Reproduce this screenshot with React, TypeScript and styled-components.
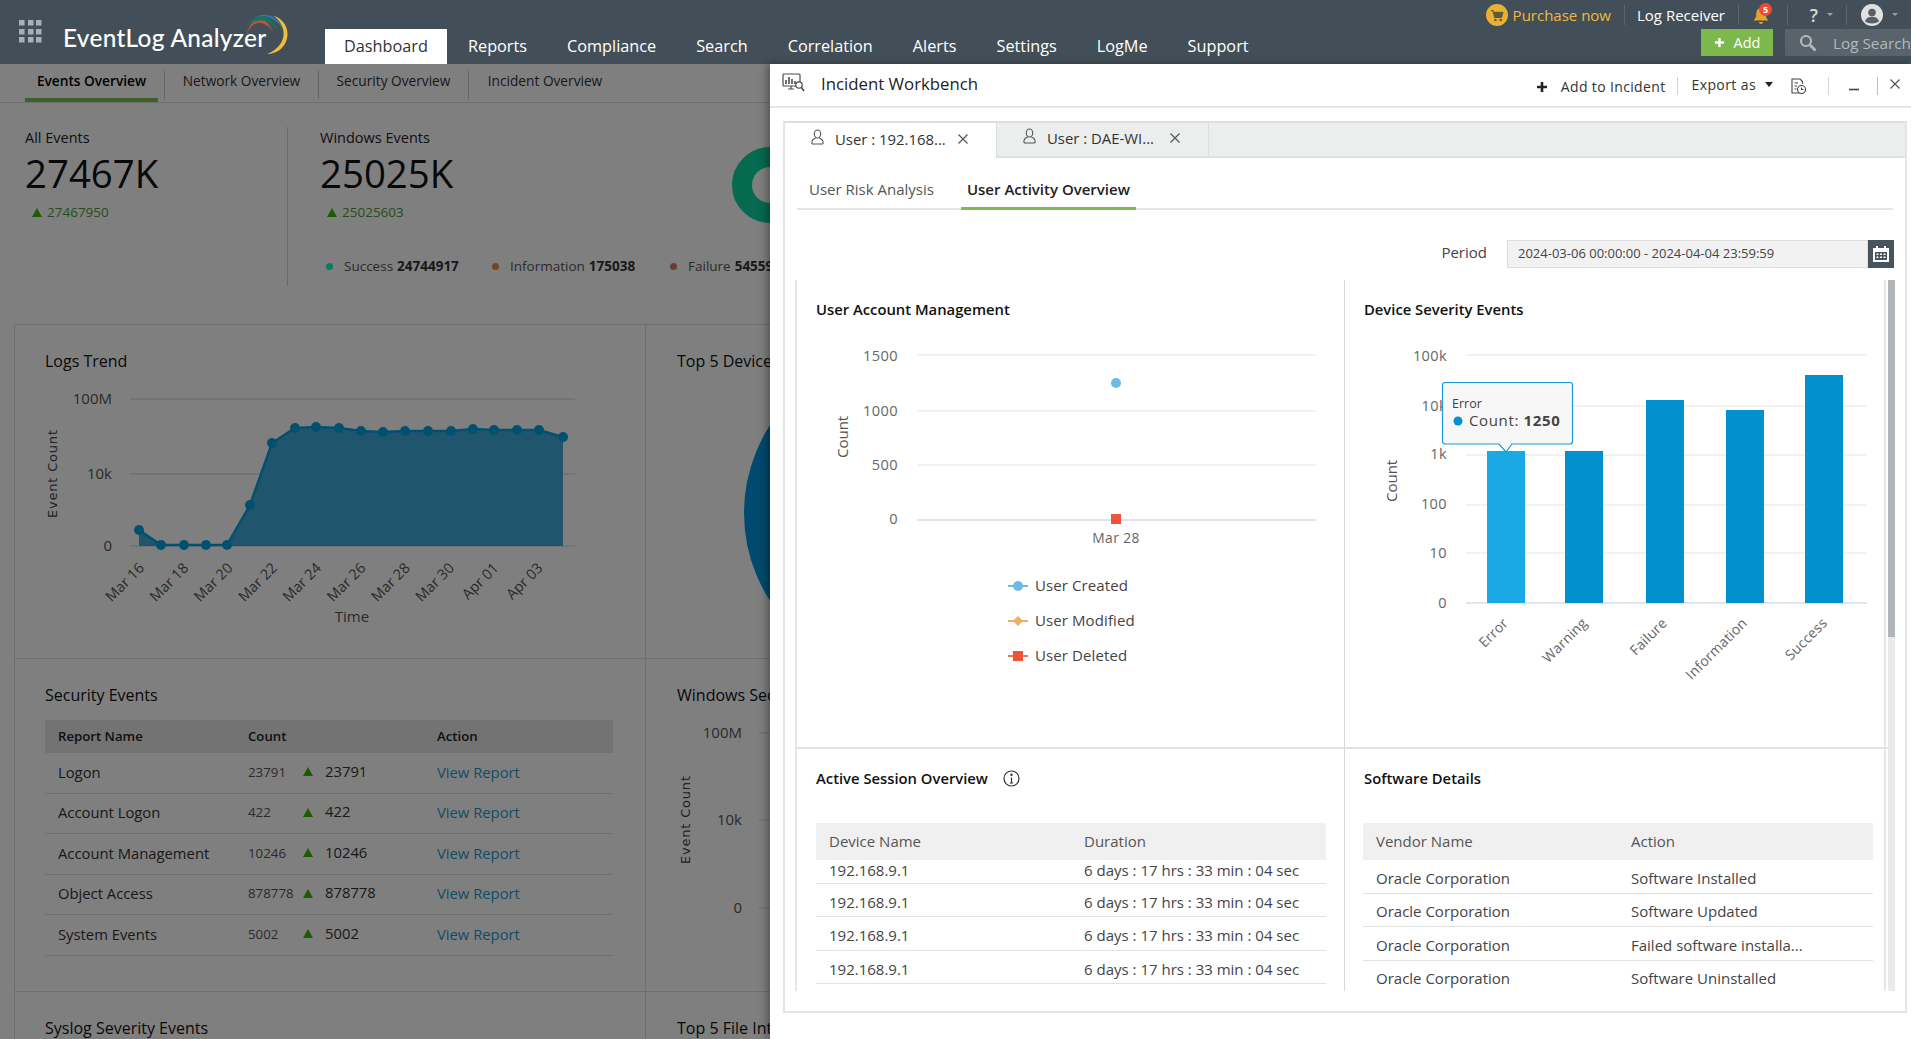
import React from "react";
import styled, { createGlobalStyle } from "styled-components";

const Global = createGlobalStyle`
  html, body { margin: 0; padding: 0; background: #fff; }
  body { font-family: "Open Sans", "Liberation Sans", sans-serif; color: #222; }
  * { box-sizing: border-box; }
`;

const Page = styled.div`
  width: 1911px;
  height: 1039px;
  overflow: hidden;
  display: flex;
  flex-direction: column;
`;

/* ---------- top header ---------- */
const Header = styled.header`
  height: 64px;
  flex: none;
  background: #434f58;
  display: flex;
  color: #fff;
`;
const Brand = styled.div`
  width: 325px;
  flex: none;
  display: flex;
  align-items: flex-start;
  padding: 20px 0 0 19px;
`;
const BrandName = styled.span`
  font-family: "Lato", "Open Sans", sans-serif;
  font-size: 24.4px;
  font-weight: 500;
  line-height: 30px;
  margin: 3px 0 0 21px;
  color: #fff;
  letter-spacing: 0.3px;
  white-space: nowrap;
`;
const BrandArc = styled.svg`
  margin: -8px 0 0 -22px;
  flex: none;
`;
const Nav = styled.nav`
  display: flex;
  align-items: flex-end;
  height: 64px;
`;
const NavItem = styled.div<{ $active?: boolean }>`
  height: 35px;
  line-height: 34px;
  font-size: 16.25px;
  padding: 0 20px;
  white-space: nowrap;
  ${(p) => (p.$active ? "background:#fff;color:#333;width:122px;padding:0 0 0 19px;margin-right:1px;" : "color:#fff;")}
`;
const HeaderRight = styled.div`
  margin-left: auto;
  display: flex;
  flex-direction: column;
  align-items: flex-end;
`;
const TopRow = styled.div`
  height: 29px;
  display: flex;
  align-items: center;
`;
const TopCell = styled.div<{ $w: number; $line?: boolean; $color?: string }>`
  width: ${(p) => p.$w}px;
  height: 20px;
  display: flex;
  align-items: center;
  justify-content: flex-end;
  gap: 5px;
  font-size: 15px;
  white-space: nowrap;
  color: ${(p) => p.$color || "#fff"};
  border-right: ${(p) => (p.$line ? "1px solid #5b666e" : "none")};
  padding-right: 13px;
`;
const HelpMark = styled.span`
  font-size: 18px;
  font-weight: 600;
`;
const Caret = styled.i`
  display: inline-block;
  border-left: 3px solid transparent;
  border-right: 3px solid transparent;
  border-top: 3px solid #9aa2a8;
  margin-left: 4px;
`;
const BellWrap = styled.span`
  position: relative;
  display: flex;
  width: 22px;
  height: 22px;
`;
const BellBadge = styled.span`
  position: absolute;
  left: 7px;
  top: -1px;
  width: 13px;
  height: 13px;
  border-radius: 50%;
  background: #ec4a35;
  color: #fff;
  font-size: 9px;
  font-weight: 700;
  line-height: 13px;
  text-align: center;
`;
const ToolRow = styled.div`
  display: flex;
  gap: 12px;
`;
const AddButton = styled.div`
  width: 72px;
  height: 27px;
  background: #7db84d;
  color: #fff;
  font-size: 14.5px;
  display: flex;
  align-items: center;
  justify-content: center;
  gap: 9px;
`;
const SearchBox = styled.div`
  width: 126px;
  height: 27px;
  background: #58636b;
  color: #b3b9bd;
  font-size: 15.3px;
  display: flex;
  align-items: center;
  gap: 16px;
  padding-left: 14px;
  white-space: nowrap;
  overflow: hidden;
`;

/* ---------- main area ---------- */
const Main = styled.div`
  flex: 1;
  min-height: 0;
  display: flex;
`;
const Dashboard = styled.section`
  width: 770px;
  flex: none;
  position: relative;
  overflow: hidden;
  background: #fff;
`;
const Dim = styled.div`
  position: absolute;
  inset: 0;
  background: rgba(0, 0, 0, 0.5);
`;
const SubNav = styled.div`
  height: 39px;
  display: flex;
  padding-left: 25px;
  border-bottom: 1px solid #dcdcdc;
`;
const SubNavItem = styled.div<{ $active?: boolean; $w: number }>`
  width: ${(p) => p.$w}px;
  height: 38px;
  padding-top: 7px;
  font-size: 13.7px;
  line-height: 20px;
  text-align: center;
  white-space: nowrap;
  color: ${(p) => (p.$active ? "#000" : "#333")};
  font-weight: ${(p) => (p.$active ? 600 : 400)};
  border-bottom: ${(p) => (p.$active ? "4px solid #7fc04a" : "none")};
`;
const SubNavSep = styled.i<{ $ml?: number }>`
  width: 1px;
  height: 28px;
  margin: 7px 0 0 ${(p) => p.$ml || 0}px;
  background: #c8c8c8;
  flex: none;
`;
const StatsRow = styled.div`
  height: 221px;
  display: flex;
  padding: 24px 0 0 25px;
`;
const StatBlock = styled.div<{ $first?: boolean }>`
  height: 159px;
  flex: none;
  ${(p) => (p.$first ? "width:263px;border-right:1px solid #d4d4d4;" : "padding-left:32px;")}
  white-space: nowrap;
`;
const StatLabel = styled.div`
  font-size: 14.5px;
  line-height: 22px;
  color: #222;
`;
const StatValue = styled.div`
  font-size: 38.4px;
  line-height: 48px;
  color: #111;
`;
const StatDelta = styled.div`
  margin: 5px 0 0 7px;
  font-size: 13.5px;
  line-height: 20px;
  color: #4f9a35;
  display: flex;
  align-items: center;
  gap: 5px;
`;
const UpArrow = styled.i`
  display: inline-block;
  border-left: 5px solid transparent;
  border-right: 5px solid transparent;
  border-bottom: 9px solid #38b800;
  flex: none;
`;
const LegendRow = styled.div`
  margin: 34px 0 0 6px;
  display: flex;
  align-items: center;
  line-height: 20px;
  font-size: 13.5px;
  color: #555;
`;
const LegendItem = styled.span<{ $w: number; $dot: string }>`
  width: ${(p) => p.$w}px;
  flex: none;
  display: flex;
  align-items: center;
  gap: 11px;
  &::before {
    content: "";
    width: 7px;
    height: 7px;
    border-radius: 50%;
    background: ${(p) => p.$dot};
  }
  b {
    color: #333;
    font-weight: 700;
    margin-left: -7px;
  }
`;
const Donut = styled.div`
  position: absolute;
  left: 732px;
  top: 83px;
  width: 76px;
  height: 76px;
  border-radius: 50%;
  border: 20px solid #0ad49f;
`;
const CellGrid = styled.div`
  margin-left: 14px;
  display: grid;
  grid-template-columns: 631px 640px;
  grid-auto-rows: 333.5px;
  border-top: 1px solid #dedede;
`;
const Cell = styled.div<{ $right?: boolean }>`
  border-left: 1px solid #dedede;
  border-bottom: 1px solid #dedede;
  padding: ${(p) => (p.$right ? "24px 0 0 31px" : "24px 0 0 30px")};
  overflow: hidden;
  position: relative;
`;
const CellTitle = styled.h3`
  margin: 0;
  font-size: 16px;
  font-weight: 400;
  line-height: 24px;
  color: #111;
  white-space: nowrap;
`;
const TrendSvg = styled.svg`
  display: block;
  margin: 3px 0 0 -30px;
`;
const SideSvg = styled.svg`
  display: block;
  margin: 3px 0 0 -31px;
`;
const PieDisc = styled.div`
  position: absolute;
  left: 98px;
  top: 27px;
  width: 322px;
  height: 322px;
  border-radius: 50%;
  background: #0094dc;
`;
const SecTable = styled.table`
  width: 568px;
  margin-top: 13px;
  border-collapse: collapse;
  table-layout: fixed;
  font-size: 14.8px;
  color: #333;
  th {
    height: 33px;
    background: #e6e6e6;
    font-weight: 600;
    font-size: 13.2px;
    text-align: left;
    padding: 0 0 0 13px;
    color: #222;
  }
  td {
    height: 40.5px;
    border-bottom: 1px solid #dedede;
    padding: 0 0 2px 13px;
    white-space: nowrap;
  }
`;
const NameCol = styled.col`
  width: 190px;
`;
const CountCol = styled.col`
  width: 189px;
`;
const CountCell = styled.div`
  display: flex;
  align-items: center;
`;
const SmallCount = styled.span`
  width: 55px;
  font-size: 13.3px;
  color: #555;
`;
const BigCount = styled.span`
  margin: -2px 0 0 12px;
  font-size: 14.8px;
  color: #333;
`;
const ReportLink = styled.span`
  color: #1f9acb;
`;

/* ---------- incident panel ---------- */
const Panel = styled.aside`
  flex: 1;
  min-width: 0;
  position: relative;
  background: #fff;
  box-shadow: -3px 0 8px rgba(0, 0, 0, 0.35);
  display: flex;
  flex-direction: column;
`;
const PanelHead = styled.div`
  height: 44px;
  flex: none;
  display: flex;
  align-items: center;
  border-bottom: 2px solid #e6e6e6;
  padding: 0 11px 0 12px;
`;
const PanelTitle = styled.h2`
  margin: -4px 0 0 16px;
  font-size: 16.8px;
  font-weight: 400;
  color: #222;
`;
const PanelActions = styled.div`
  margin-left: auto;
  display: flex;
  align-items: center;
  color: #333;
  font-size: 14px;
`;
const AddIncident = styled.span`
  display: flex;
  align-items: center;
  gap: 13px;
  letter-spacing: 0.35px;
  padding-right: 11px;
  margin-top: 3px;
`;
const ActionSep = styled.i<{ $ml: number; $mr: number; $dark?: boolean }>`
  width: 1px;
  height: 18px;
  margin: 2px ${(p) => p.$mr}px 0 ${(p) => p.$ml}px;
  background: ${(p) => (p.$dark ? "#bdbdbd" : "#d4d4d4")};
`;
const ExportAs = styled.span`
  display: flex;
  align-items: center;
  gap: 9px;
  letter-spacing: 0.4px;
  margin-top: -2px;
`;
const DownTri = styled.i`
  border-left: 4.5px solid transparent;
  border-right: 4.5px solid transparent;
  border-top: 5px solid #222;
`;
const Frame = styled.div`
  margin: 13px 4px 0 13px;
  height: 892px;
  border: 2px solid #e4e6e6;
  border-top: 2px solid #dcdfdf;
  display: flex;
  flex-direction: column;
`;
const TabStrip = styled.div`
  height: 35px;
  flex: none;
  display: flex;
  background: #eceeee;
  border-bottom: 2px solid #dfe2e2;
`;
const UserTab = styled.div<{ $active?: boolean }>`
  width: 212px;
  height: ${(p) => (p.$active ? 35 : 33)}px;
  background: ${(p) => (p.$active ? "#fff" : "#eceeee")};
  border-right: 1px solid #dcdfdf;
  display: flex;
  align-items: center;
  padding: 0 0 3px 25px;
  font-size: 14.9px;
  color: #333;
  gap: 10px;
  white-space: nowrap;
`;
const TabText = styled.span`
  width: 113px;
`;
const SubTabs = styled.div`
  margin: 0 12px;
  height: 52px;
  flex: none;
  display: flex;
  align-items: flex-end;
  border-bottom: 2px solid #e6e6e6;
`;
const SubTab = styled.div<{ $active?: boolean }>`
  height: 40px;
  margin-bottom: -2px;
  padding: 7px 6px 0;
  margin-left: ${(p) => (p.$active ? 21 : 6)}px;
  line-height: 24px;
  font-size: 15px;
  white-space: nowrap;
  color: ${(p) => (p.$active ? "#222" : "#555")};
  font-weight: ${(p) => (p.$active ? 600 : 400)};
  border-bottom: 3px solid ${(p) => (p.$active ? "#7fb84e" : "transparent")};
`;
const PeriodRow = styled.div`
  height: 70px;
  flex: none;
  display: flex;
  justify-content: flex-end;
  align-items: flex-start;
  padding: 30px 11px 0 0;
`;
const PeriodLabel = styled.span`
  font-size: 15px;
  line-height: 24px;
  color: #444;
  margin-right: 20px;
`;
const PeriodInput = styled.div`
  width: 361px;
  height: 28px;
  background: #f2f2f2;
  border: 1px solid #dddddd;
  font-size: 13px;
  line-height: 24px;
  padding-left: 10px;
  color: #444;
`;
const CalendarButton = styled.div`
  width: 26px;
  height: 28px;
  background: #46545d;
  display: flex;
  align-items: center;
  justify-content: center;
`;
const Scroller = styled.div`
  margin-left: 10px;
  height: 711px;
  display: flex;
  overflow: hidden;
`;
const Cards = styled.div`
  width: 1091px;
  flex: none;
  display: grid;
  grid-template-columns: 548px 543px;
  grid-template-rows: 469px 1fr;
  border-left: 2px solid #e6e6e6;
  border-right: 2px solid #e6e6e6;
`;
const Card = styled.div<{ $line?: boolean; $bottom?: boolean }>`
  padding-top: 19px;
  ${(p) => (p.$line ? "border-right:1px solid #d8d8d8;" : "")}
  ${(p) => (p.$bottom ? "border-bottom:2px solid #e2e2e2;" : "")}
  overflow: hidden;
`;
const CardTitle = styled.h4`
  margin: 0;
  padding-left: 19px;
  font-size: 14.8px;
  font-weight: 600;
  line-height: 20px;
  color: #111;
  display: flex;
  align-items: center;
  gap: 15px;
`;
const ChartSvg = styled.svg`
  display: block;
  margin-top: 1px;
`;
const SmallTable = styled.div<{ $ml: number }>`
  margin: 35px 0 0 ${(p) => p.$ml}px;
  width: 510px;
  font-size: 15px;
  color: #444;
`;
const SmallHead = styled.div`
  height: 37px;
  display: grid;
  grid-template-columns: 255px 1fr;
  align-items: center;
  padding: 0 0 1px 13px;
  background: #f0f0f0;
  color: #555;
`;
const SmallRow = styled.div<{ $h: number; $shift: number }>`
  height: ${(p) => p.$h}px;
  display: grid;
  grid-template-columns: 255px 1fr;
  align-items: center;
  padding-left: 13px;
  padding-top: ${(p) => Math.max(p.$shift, 0)}px;
  padding-bottom: ${(p) => Math.max(-p.$shift, 0)}px;
  border-bottom: 1px solid #e2e2e2;
  white-space: nowrap;
`;
const ScrollTrack = styled.div`
  width: 7px;
  margin-left: 2px;
  flex: none;
  background: #e8eaec;
`;
const ScrollThumb = styled.div`
  height: 357px;
  background: #b3b6b9;
`;
const ChromeIcon = styled.svg<{ $m?: string }>`
  flex: none;
  margin: ${(p) => p.$m || "0"};
`;

/* ---------- small drawings ---------- */
const AppGrid = () => (
  <ChromeIcon width="23" height="23" viewBox="0 0 23 23" fill="#a9afb3">
    {[0, 9, 17].flatMap((y) =>
      [0, 9, 17].map((x) => <rect key={`${x}-${y}`} x={x} y={y} width="5.5" height="5.5" />)
    )}
  </ChromeIcon>
);

const LogoArc = () => (
  <BrandArc width="44" height="44" viewBox="244 10 44 44" fill="none">
    <path d="M246.5 33C248 26 251 20 258 17C263 16 269 21 273 29C268 23 263 20.5 258 21C252 22 248.5 27 246.5 33Z" fill="#c5503f" />
    <path d="M247 24C251 17 257 14 264 14.5C270 16 275 21 278 28C273 22 268 19 262 18.5C256 18.5 251 20 247 24Z" fill="#127a5c" />
    <path d="M255 15.5C261 11.5 270 12 276 17C280 20 282 23 283 27C278 20 272 16 266 14.5C262 14 258 14.5 255 15.5Z" fill="#2b78b8" />
    <path d="M273 13.5C282 16 288 24 287.5 33C287 44 278 52 267 52C275 49 282 43 283.5 34C284.5 26 280 18 273 13.5Z" fill="#eebd3a" />
  </BrandArc>
);

const CartBadge = () => (
  <svg width="22" height="22" viewBox="0 0 22 22">
    <circle cx="11" cy="11" r="11" fill="#e9b032" />
    <path d="M5 6.5h2l1.6 7h7l1.4-5.2H7.6" fill="#5b5a3e" stroke="#5b5a3e" strokeWidth="1" />
    <circle cx="9.4" cy="16" r="1.3" fill="#5b5a3e" />
    <circle cx="14.8" cy="16" r="1.3" fill="#5b5a3e" />
  </svg>
);

const BellIcon = () => (
  <svg width="18" height="22" viewBox="0 0 18 22">
    <path d="M9 4C5.5 4 4.2 7 4.2 10.5C4.2 13.5 3 15 1.5 16.5H16.5C15 15 13.8 13.5 13.8 10.5C13.8 7 12.5 4 9 4Z" fill="#e3a32d" />
    <path d="M7 18H11C11 20.5 7 20.5 7 18Z" fill="#e3a32d" />
  </svg>
);

const AvatarIcon = () => (
  <svg width="22" height="22" viewBox="0 0 22 22">
    <circle cx="11" cy="11" r="11" fill="#dfe1e2" />
    <circle cx="11" cy="8.5" r="3.8" fill="#55606a" />
    <path d="M4 17.5C5 13.8 8 12.8 11 12.8C14 12.8 17 13.8 18 17.5C14 20 8 20 4 17.5Z" fill="#55606a" />
  </svg>
);

const PlusIcon = ({ size, color, w }: { size: number; color: string; w: number }) => (
  <svg width={size} height={size} viewBox="0 0 12 12">
    <path d="M6 1V11M1 6H11" stroke={color} strokeWidth={w} />
  </svg>
);

const SearchIcon = () => (
  <ChromeIcon width="18" height="18" viewBox="0 0 18 18" fill="none" stroke="#b3b9bd">
    <circle cx="7" cy="7" r="5" strokeWidth="2.2" />
    <path d="M11 11L16.5 16.5" strokeWidth="2.8" />
  </ChromeIcon>
);

const WorkbenchIcon = () => (
  <ChromeIcon $m="-4px 0 0 0" width="23" height="20" viewBox="0 0 23 20" fill="none" stroke="#4a4a4a" strokeWidth="1.2">
    <rect x="1" y="1" width="17" height="12" rx="1" />
    <path d="M4 11V7M7 11V4M10 11V6M13 11V8" strokeWidth="1.6" />
    <path d="M6 16H12M9 13V16" />
    <circle cx="17" cy="12" r="3.2" fill="#fff" />
    <path d="M19.5 14.5L22 18" strokeWidth="1.6" />
  </ChromeIcon>
);

const ScheduleDoc = () => (
  <ChromeIcon $m="3px 0 0 17px" width="17" height="17" viewBox="0 0 17 17" fill="none" stroke="#444" strokeWidth="1.1">
    <path d="M9 15H2V1H10L12.5 3.5V6" />
    <path d="M4.5 5H8M4.5 8H7M4.5 11H6.5" />
    <circle cx="11.5" cy="11.5" r="4" />
    <path d="M11.5 9.5V11.5H13.5" />
  </ChromeIcon>
);

const MinusIcon = () => (
  <ChromeIcon $m="4px 0 0 0" width="10" height="10" viewBox="0 0 10 10">
    <path d="M0 7.5H10" stroke="#444" strokeWidth="1.6" />
  </ChromeIcon>
);

const CloseIcon = ({ m }: { m?: string }) => (
  <ChromeIcon $m={m} width="10" height="10" viewBox="0 0 10 10">
    <path d="M0.5 0.5L9.5 9.5M9.5 0.5L0.5 9.5" stroke="#555" strokeWidth="1.2" />
  </ChromeIcon>
);

const PersonIcon = () => (
  <ChromeIcon $m="-5px 0 0 0" width="15" height="16" viewBox="0 0 15 16" fill="none" stroke="#555" strokeWidth="1.1">
    <ellipse cx="7.5" cy="5" rx="3.2" ry="4" />
    <path d="M2 15V12.5C2 10.5 4 10 5.5 9.2M13 15V12.5C13 10.5 11 10 9.5 9.2M2 15H13" />
  </ChromeIcon>
);

const CalendarIcon = () => (
  <svg width="18" height="18" viewBox="0 0 18 18" fill="#fff">
    <path d="M1 3H4V1H6V3H12V1H14V3H17V17H1ZM3 7V15H15V7Z" />
    <path d="M4.5 8.5h2v1.5h-2zM8 8.5h2v1.5h-2zM11.5 8.5h2v1.5h-2zM4.5 11.5h2V13h-2zM8 11.5h2V13h-2zM11.5 11.5h2V13h-2z" />
  </svg>
);

const InfoIcon = () => (
  <ChromeIcon width="17" height="17" viewBox="0 0 17 17" fill="none" stroke="#333" strokeWidth="1.2">
    <circle cx="8.5" cy="8.5" r="7.5" />
    <path d="M8.5 7.5V13M6.8 13H10.2" />
    <circle cx="8.5" cy="4.7" r="0.6" fill="#333" />
  </ChromeIcon>
);

/* ---------- charts ---------- */
const trendX = [139, 161, 184, 206, 227, 250, 272, 295, 316, 339, 361, 383, 405, 428, 451, 473, 494, 517, 539, 563];
const trendY = [529, 544, 544, 544, 544, 504, 442, 427, 426, 427, 430, 431, 430, 430, 430, 428, 429, 429, 429, 436];
const trendTicks = ["Mar 16", "Mar 18", "Mar 20", "Mar 22", "Mar 24", "Mar 26", "Mar 28", "Mar 30", "Apr 01", "Apr 03"];

const LogsTrendChart = () => {
  const pts = trendX.map((x, i) => `${x},${trendY[i]}`).join(" ");
  return (
    <TrendSvg width="630" height="270" viewBox="15 375 630 270" fontFamily="'Open Sans', sans-serif">
      {[398, 473, 545].map((y) => (
        <line key={y} x1="130" x2="575" y1={y} y2={y} stroke="#e2e2e2" strokeWidth="1.5" />
      ))}
      {[["100M", 403], ["10k", 478], ["0", 550]].map(([t, y]) => (
        <text key={t} x="112" y={y} textAnchor="end" fontSize="15" fill="#555">{t}</text>
      ))}
      <text transform="translate(57 517) rotate(-90)" fontSize="13" letterSpacing="0.8" fill="#444" fontFamily="'DejaVu Sans', sans-serif">Event Count</text>
      <polygon points={`139,545 ${pts} 563,545`} fill="#3eacda" />
      <polyline points={pts} fill="none" stroke="#04a0de" strokeWidth="2.5" />
      {trendX.map((x, i) => (
        <circle key={x} cx={x} cy={trendY[i]} r="5" fill="#04a0de" />
      ))}
      {trendTicks.map((t, i) => (
        <text key={t} transform={`translate(${145 + i * 44.3} 568) rotate(-45)`} textAnchor="end" fontSize="14.5" fill="#555">{t}</text>
      ))}
      <text x="352" y="621" textAnchor="middle" fontSize="15" fill="#555">Time</text>
    </TrendSvg>
  );
};

const WindowsChart = () => (
  <SideSvg width="130" height="270" viewBox="645 710 130 270" fontFamily="'Open Sans', sans-serif">
    {[["100M", 738], ["10k", 825], ["0", 913]].map(([t, y]) => (
      <text key={t} x="741" y={y} textAnchor="end" fontSize="15" fill="#555">{t}</text>
    ))}
    {[733, 820, 908].map((y) => (
      <line key={y} x1="758" x2="775" y1={y} y2={y} stroke="#e2e2e2" strokeWidth="1.5" />
    ))}
    <text transform="translate(689 864) rotate(-90)" fontSize="13" letterSpacing="0.8" fill="#444" fontFamily="'DejaVu Sans', sans-serif">Event Count</text>
  </SideSvg>
);

const UserAccountChart = () => (
  <ChartSvg width="546" height="427" viewBox="797 320 546 427" fontFamily="'Open Sans', sans-serif">
    {[355, 411, 465].map((y) => (
      <line key={y} x1="917" x2="1316" y1={y} y2={y} stroke="#eeeeee" strokeWidth="1.5" />
    ))}
    <line x1="917" x2="1316" y1="520" y2="520" stroke="#d5deea" strokeWidth="1.5" />
    {[["1500", 361], ["1000", 416], ["500", 470], ["0", 524]].map(([t, y]) => (
      <text key={t} x="898" y={y} textAnchor="end" fontSize="14.6" letterSpacing="0.4" fill="#666">{t}</text>
    ))}
    <text transform="translate(848 458) rotate(-90)" fontSize="15" fill="#555">Count</text>
    <circle cx="1116" cy="383" r="5" fill="#6fb9e6" />
    <rect x="1111" y="514" width="10" height="10" fill="#f0533a" />
    <text x="1116" y="543" textAnchor="middle" fontSize="13.8" letterSpacing="0.4" fill="#666">Mar 28</text>
    <g fontSize="15" fontWeight="500" fill="#444" letterSpacing="0.1">
      <line x1="1008" x2="1028" y1="586" y2="586" stroke="#6fb9e6" strokeWidth="2" />
      <circle cx="1018" cy="586" r="5" fill="#6fb9e6" />
      <text x="1035" y="591">User Created</text>
      <line x1="1008" x2="1028" y1="621" y2="621" stroke="#f0b060" strokeWidth="2" />
      <path d="M1018 616L1023 621L1018 626L1013 621Z" fill="#f0b060" />
      <text x="1035" y="626">User Modified</text>
      <line x1="1008" x2="1028" y1="656" y2="656" stroke="#f07a50" strokeWidth="2" />
      <rect x="1013" y="651" width="10" height="10" fill="#f0533a" />
      <text x="1035" y="661">User Deleted</text>
    </g>
  </ChartSvg>
);

const severityBars = [
  { name: "Error", x: 1487, top: 451, lx: 1509 },
  { name: "Warning", x: 1565, top: 451, lx: 1588 },
  { name: "Failure", x: 1646, top: 400, lx: 1668 },
  { name: "Information", x: 1726, top: 410, lx: 1748 },
  { name: "Success", x: 1805, top: 375, lx: 1828 },
];

const SeverityChart = () => (
  <ChartSvg width="543" height="427" viewBox="1345 320 543 427" fontFamily="'Open Sans', sans-serif">
    {[355, 406, 455, 505, 553].map((y) => (
      <line key={y} x1="1466" x2="1867" y1={y} y2={y} stroke="#eeeeee" strokeWidth="1.5" />
    ))}
    <line x1="1466" x2="1867" y1="603" y2="603" stroke="#d5deea" strokeWidth="1.5" />
    {[["100k", 361], ["10k", 411], ["1k", 459], ["100", 509], ["10", 558], ["0", 608]].map(([t, y]) => (
      <text key={t} x="1447" y={y} textAnchor="end" fontSize="14.5" letterSpacing="0.4" fill="#666">{t}</text>
    ))}
    <text transform="translate(1397 502) rotate(-90)" fontSize="15" fill="#555">Count</text>
    {severityBars.map((b, i) => (
      <rect key={b.name} x={b.x} y={b.top} width="38" height={603 - b.top} fill={i === 0 ? "#1aa9e5" : "#0291ce"} />
    ))}
    {severityBars.map((b) => (
      <text key={b.name} transform={`translate(${b.lx} 624) rotate(-45)`} textAnchor="end" fontSize="14" letterSpacing="0.2" fill="#666">{b.name}</text>
    ))}
    <path
      d="M1445 382.5H1570Q1572.5 382.5 1572.5 385V441Q1572.5 444 1570 444H1512L1506 452L1499 444H1445Q1442.5 444 1442.5 441V385Q1442.5 382.5 1445 382.5Z"
      fill="#f7f7f7"
      stroke="#1a9bdc"
      strokeWidth="1.2"
    />
    <text x="1452" y="408" fontSize="12.5" fill="#444">Error</text>
    <circle cx="1458" cy="421" r="4.5" fill="#0291ce" />
    <text x="1469" y="426" fontSize="15" letterSpacing="0.65" fill="#444">
      Count: <tspan fontWeight="700">1250</tspan>
    </text>
  </ChartSvg>
);

/* ---------- data ---------- */
const securityRows = [
  { name: "Logon", count: "23791" },
  { name: "Account Logon", count: "422" },
  { name: "Account Management", count: "10246" },
  { name: "Object Access", count: "878778" },
  { name: "System Events", count: "5002" },
];
const softwareRows = ["Software Installed", "Software Updated", "Failed software installa...", "Software Uninstalled"];
const sessionRows = [
  { h: 24, shift: -6 },
  { h: 33, shift: 4 },
  { h: 34, shift: 3 },
  { h: 33, shift: 4 },
];

export default function App() {
  return (
    <Page>
      <Global />
      <Header>
        <Brand>
          <AppGrid />
          <BrandName>EventLog Analyzer</BrandName>
          <LogoArc />
        </Brand>
        <Nav>
          <NavItem $active>Dashboard</NavItem>
          {["Reports", "Compliance", "Search", "Correlation", "Alerts", "Settings", "LogMe", "Support"].map((n) => (
            <NavItem key={n}>{n}</NavItem>
          ))}
        </Nav>
        <HeaderRight>
          <TopRow>
            <TopCell $w={151} $line $color="#efb93c">
              <CartBadge />
              Purchase now
            </TopCell>
            <TopCell $w={114} $line>Log Receiver</TopCell>
            <TopCell $w={49} $line>
              <BellWrap>
                <BellIcon />
                <BellBadge>5</BellBadge>
              </BellWrap>
            </TopCell>
            <TopCell $w={59} $line $color="#d8dbdd">
              <HelpMark>?</HelpMark>
              <Caret />
            </TopCell>
            <TopCell $w={64} $color="#d8dbdd">
              <AvatarIcon />
              <Caret />
            </TopCell>
          </TopRow>
          <ToolRow>
            <AddButton>
              <PlusIcon size={11} color="#fff" w={2.6} />
              Add
            </AddButton>
            <SearchBox>
              <SearchIcon />
              Log Search
            </SearchBox>
          </ToolRow>
        </HeaderRight>
      </Header>

      <Main>
        <Dashboard>
          <SubNav>
            <SubNavItem $active $w={133}>Events Overview</SubNavItem>
            <SubNavSep $ml={6} />
            <SubNavItem $w={153}>Network Overview</SubNavItem>
            <SubNavSep />
            <SubNavItem $w={149}>Security Overview</SubNavItem>
            <SubNavSep />
            <SubNavItem $w={152}>Incident Overview</SubNavItem>
          </SubNav>
          <StatsRow>
            <StatBlock $first>
              <StatLabel>All Events</StatLabel>
              <StatValue>27467K</StatValue>
              <StatDelta><UpArrow />27467950</StatDelta>
            </StatBlock>
            <StatBlock>
              <StatLabel>Windows Events</StatLabel>
              <StatValue>25025K</StatValue>
              <StatDelta><UpArrow />25025603</StatDelta>
              <LegendRow>
                <LegendItem $w={166} $dot="#17f5c5">Success <b>24744917</b></LegendItem>
                <LegendItem $w={178} $dot="#ee8a3a">Information <b>175038</b></LegendItem>
                <LegendItem $w={140} $dot="#d9776a">Failure <b>54559</b></LegendItem>
              </LegendRow>
            </StatBlock>
          </StatsRow>
          <Donut />
          <CellGrid>
            <Cell>
              <CellTitle>Logs Trend</CellTitle>
              <LogsTrendChart />
            </Cell>
            <Cell $right>
              <CellTitle>Top 5 Devices</CellTitle>
              <PieDisc />
            </Cell>
            <Cell>
              <CellTitle>Security Events</CellTitle>
              <SecTable>
                <colgroup>
                  <NameCol />
                  <CountCol />
                  <col />
                </colgroup>
                <thead>
                  <tr><th>Report Name</th><th>Count</th><th>Action</th></tr>
                </thead>
                <tbody>
                  {securityRows.map((r) => (
                    <tr key={r.name}>
                      <td>{r.name}</td>
                      <td>
                        <CountCell>
                          <SmallCount>{r.count}</SmallCount>
                          <UpArrow />
                          <BigCount>{r.count}</BigCount>
                        </CountCell>
                      </td>
                      <td><ReportLink>View Report</ReportLink></td>
                    </tr>
                  ))}
                </tbody>
              </SecTable>
            </Cell>
            <Cell $right>
              <CellTitle>Windows Security Events</CellTitle>
              <WindowsChart />
            </Cell>
            <Cell>
              <CellTitle>Syslog Severity Events</CellTitle>
            </Cell>
            <Cell $right>
              <CellTitle>Top 5 File Integrity</CellTitle>
            </Cell>
          </CellGrid>
          <Dim />
        </Dashboard>

        <Panel>
          <PanelHead>
            <WorkbenchIcon />
            <PanelTitle>Incident Workbench</PanelTitle>
            <PanelActions>
              <AddIncident>
                <PlusIcon size={12} color="#222" w={2.6} />
                Add to Incident
              </AddIncident>
              <ActionSep $ml={0} $mr={14} />
              <ExportAs>Export as<DownTri /></ExportAs>
              <ScheduleDoc />
              <ActionSep $ml={21} $mr={20} />
              <MinusIcon />
              <ActionSep $ml={18} $mr={12} $dark />
              <CloseIcon m="-3px 0 0 0" />
            </PanelActions>
          </PanelHead>
          <Frame>
            <TabStrip>
              <UserTab $active>
                <PersonIcon />
                <TabText>User : 192.168...</TabText>
                <CloseIcon />
              </UserTab>
              <UserTab>
                <PersonIcon />
                <TabText>User : DAE-WI...</TabText>
                <CloseIcon />
              </UserTab>
            </TabStrip>
            <SubTabs>
              <SubTab>User Risk Analysis</SubTab>
              <SubTab $active>User Activity Overview</SubTab>
            </SubTabs>
            <PeriodRow>
              <PeriodLabel>Period</PeriodLabel>
              <PeriodInput>2024-03-06 00:00:00 - 2024-04-04 23:59:59</PeriodInput>
              <CalendarButton><CalendarIcon /></CalendarButton>
            </PeriodRow>
            <Scroller>
              <Cards>
                <Card $line $bottom>
                  <CardTitle>User Account Management</CardTitle>
                  <UserAccountChart />
                </Card>
                <Card $bottom>
                  <CardTitle>Device Severity Events</CardTitle>
                  <SeverityChart />
                </Card>
                <Card $line>
                  <CardTitle>Active Session Overview <InfoIcon /></CardTitle>
                  <SmallTable $ml={19}>
                    <SmallHead><span>Device Name</span><span>Duration</span></SmallHead>
                    {sessionRows.map((r, i) => (
                      <SmallRow key={i} $h={r.h} $shift={r.shift}>
                        <span>192.168.9.1</span>
                        <span>6 days : 17 hrs : 33 min : 04 sec</span>
                      </SmallRow>
                    ))}
                  </SmallTable>
                </Card>
                <Card>
                  <CardTitle>Software Details</CardTitle>
                  <SmallTable $ml={18}>
                    <SmallHead><span>Vendor Name</span><span>Action</span></SmallHead>
                    {softwareRows.map((s) => (
                      <SmallRow key={s} $h={33.5} $shift={3}>
                        <span>Oracle Corporation</span>
                        <span>{s}</span>
                      </SmallRow>
                    ))}
                  </SmallTable>
                </Card>
              </Cards>
              <ScrollTrack><ScrollThumb /></ScrollTrack>
            </Scroller>
          </Frame>
        </Panel>
      </Main>
    </Page>
  );
}
